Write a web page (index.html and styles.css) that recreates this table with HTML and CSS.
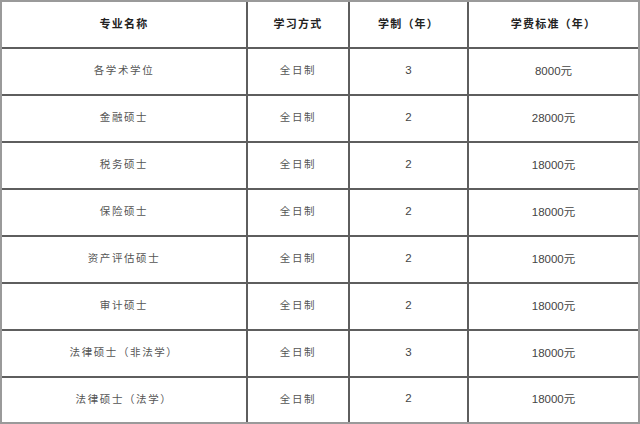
FILE: index.html
```html
<!DOCTYPE html>
<html lang="zh-CN">
<head>
<meta charset="utf-8">
<title>学费标准</title>
<link rel="stylesheet" href="styles.css">
</head>
<body>
<div class="fee-table">
  <div class="cell head">专业名称</div>
  <div class="cell head">学习方式</div>
  <div class="cell head">学制（年）</div>
  <div class="cell head last-col">学费标准（年）</div>

  <div class="cell">各学术学位</div>
  <div class="cell">全日制</div>
  <div class="cell num">3</div>
  <div class="cell num last-col">8000元</div>

  <div class="cell">金融硕士</div>
  <div class="cell">全日制</div>
  <div class="cell num">2</div>
  <div class="cell num last-col">28000元</div>

  <div class="cell">税务硕士</div>
  <div class="cell">全日制</div>
  <div class="cell num">2</div>
  <div class="cell num last-col">18000元</div>

  <div class="cell">保险硕士</div>
  <div class="cell">全日制</div>
  <div class="cell num">2</div>
  <div class="cell num last-col">18000元</div>

  <div class="cell">资产评估硕士</div>
  <div class="cell">全日制</div>
  <div class="cell num">2</div>
  <div class="cell num last-col">18000元</div>

  <div class="cell">审计硕士</div>
  <div class="cell">全日制</div>
  <div class="cell num">2</div>
  <div class="cell num last-col">18000元</div>

  <div class="cell">法律硕士（非法学）</div>
  <div class="cell">全日制</div>
  <div class="cell num">3</div>
  <div class="cell num last-col">18000元</div>

  <div class="cell last-row">法律硕士（法学）</div>
  <div class="cell last-row">全日制</div>
  <div class="cell num last-row">2</div>
  <div class="cell num last-col last-row">18000元</div>
</div>
</body>
</html>
```

FILE: styles.css
```css
html, body {
  margin: 0;
  padding: 0;
  background: #ffffff;
}

body {
  font-family: "Noto Sans CJK SC", "Liberation Sans", sans-serif;
}

.fee-table {
  box-sizing: border-box;
  width: 640px;
  height: 424px;
  border: 2px solid #9a9a9a;
  display: grid;
  grid-template-columns: 246px 102px 119px 1fr;
  grid-template-rows: repeat(8, 47px) 1fr;
  overflow: hidden;
}

.cell {
  box-sizing: border-box;
  border-right: 2px solid #5e5e5e;
  border-bottom: 2px solid #5e5e5e;
  display: flex;
  align-items: center;
  justify-content: center;
  padding-bottom: 4px;
  font-size: 10.5px;
  letter-spacing: 1.6px;
  color: #555555;
}

.head {
  font-weight: bold;
  color: #222222;
  font-size: 11px;
  letter-spacing: 1.2px;
}

.num {
  font-family: "Liberation Sans", "Noto Sans CJK SC", sans-serif;
  font-size: 11.5px;
  letter-spacing: 0;
  color: #444444;
}

.last-col {
  border-right: none;
}

.last-row {
  border-bottom: none;
}
```
